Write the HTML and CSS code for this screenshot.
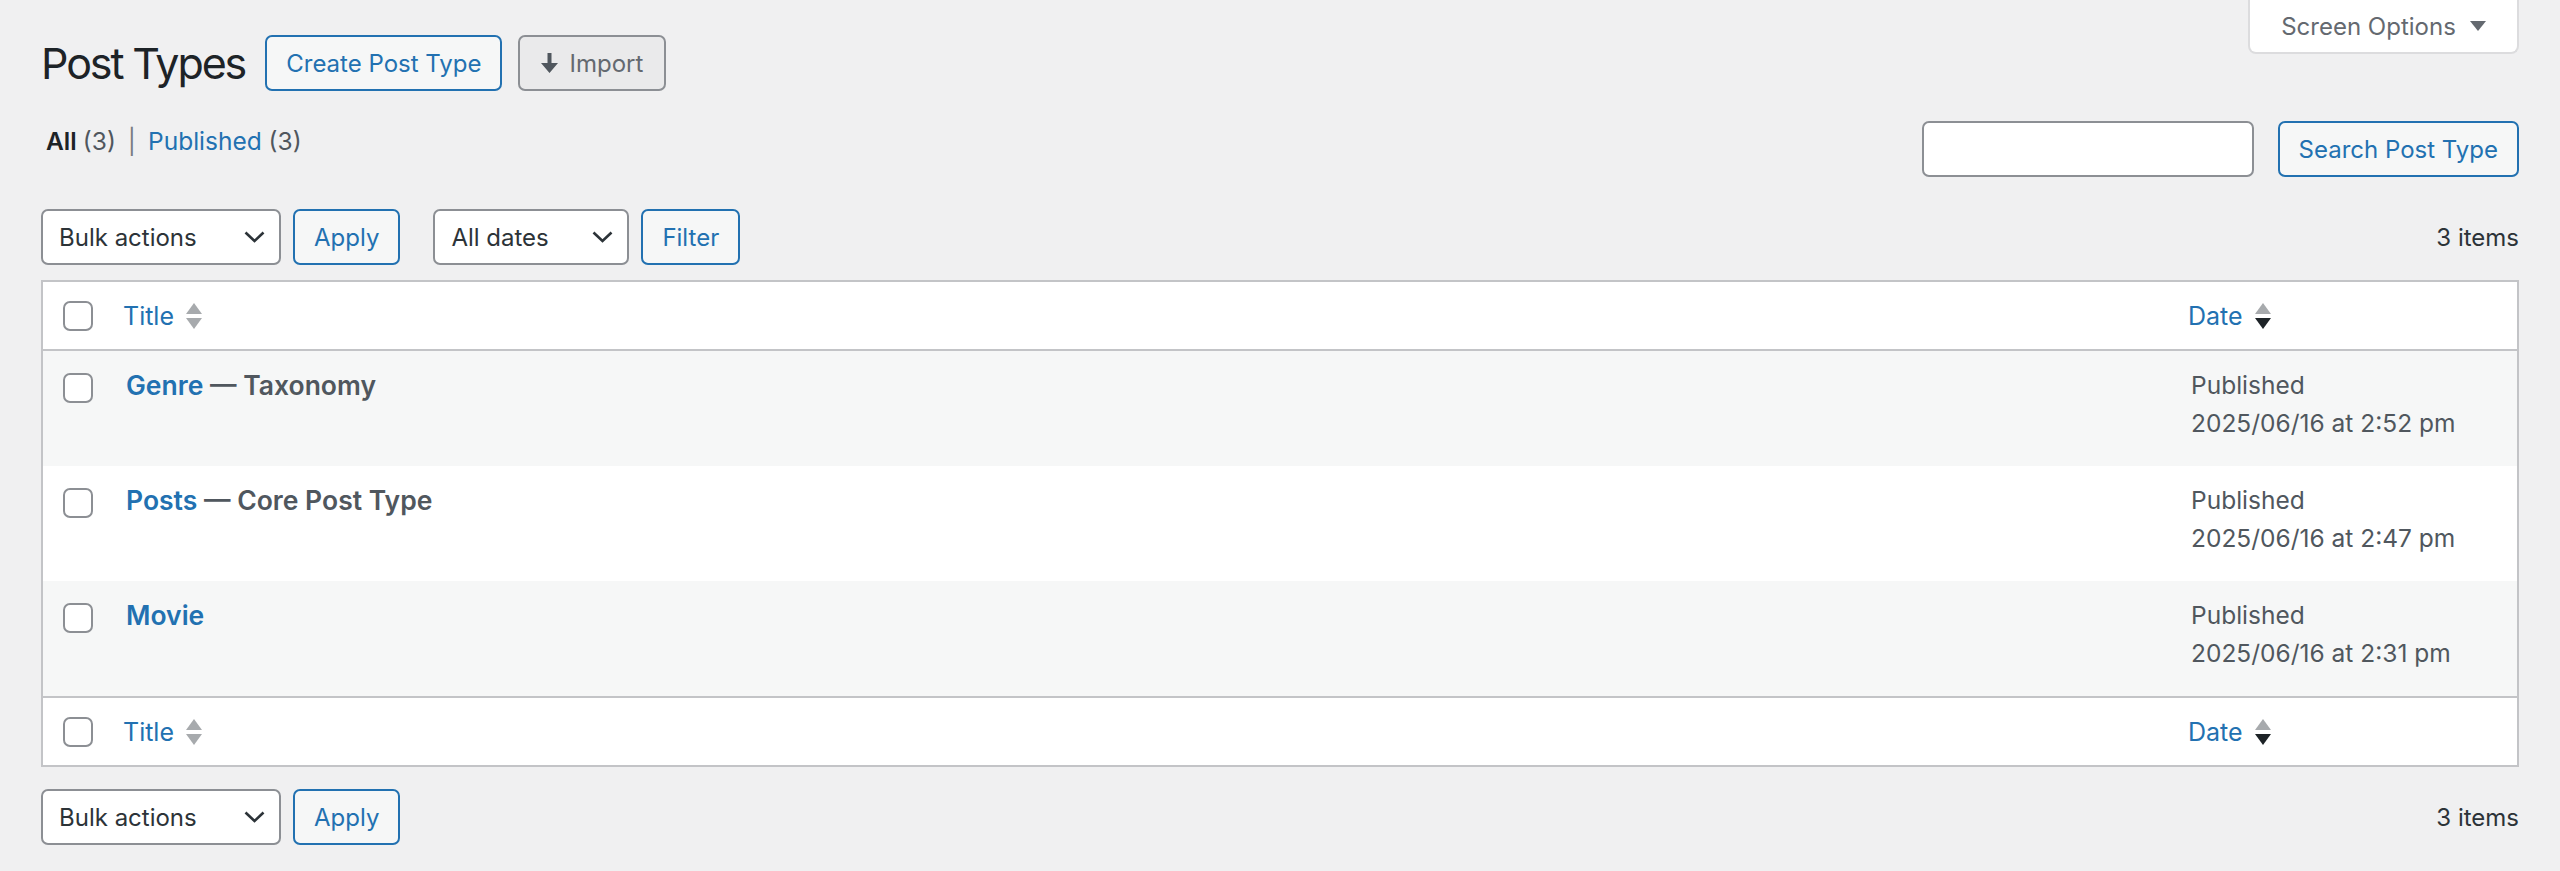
FILE: index.html
```html
<!DOCTYPE html>
<html lang="en">
<head>
    <meta charset="UTF-8">
    <meta name="viewport" content="width=device-width, initial-scale=1.0">
    <title>Post Types</title>
    <link rel="stylesheet" href="styles.css">
</head>
<body>

<div class="wrap">
    <div class="screen-meta-links">
        <button class="screen-options-toggle">
            Screen Options
            <svg class="toggle-arrow" width="16" height="10" viewBox="0 0 16 10"><path d="M0 0H16L8 10Z"/></svg>
        </button>
    </div>

    <div class="page-header">
        <h1>Post Types</h1>
        <a href="#" class="button page-title-action">Create Post Type</a>
        <button class="import-button">
            <svg width="17" height="20" viewBox="0 0 17 20"><path d="M6.5 0H10.5V10H17L8.5 20L0 10H6.5Z"/></svg>
            Import
        </button>
    </div>

    <div class="views-row">
        <ul class="subsubsub">
            <li class="current">All <span class="count">(3)</span></li>
            <li class="sep">|</li>
            <li><a href="#">Published</a> <span class="count">(3)</span></li>
        </ul>
        <div class="search-box">
            <input type="search" class="search-input">
            <button class="button">Search Post Type</button>
        </div>
    </div>

    <div class="tablenav top">
        <div class="actions">
            <label class="select-wrap bulk">
                <select><option>Bulk actions</option></select>
                <svg class="chevron" width="21" height="12" viewBox="0 0 21 12"><path d="M1.5 1.5L10.5 10L19.5 1.5"/></svg>
            </label>
            <button class="button">Apply</button>
        </div>
        <div class="actions">
            <label class="select-wrap dates">
                <select><option>All dates</option></select>
                <svg class="chevron" width="21" height="12" viewBox="0 0 21 12"><path d="M1.5 1.5L10.5 10L19.5 1.5"/></svg>
            </label>
            <button class="button">Filter</button>
        </div>
        <div class="displaying-num">3 items</div>
    </div>

    <table class="list-table">
        <thead>
            <tr>
                <th class="check-column"><input type="checkbox"></th>
                <th class="title-column">
                    <a href="#" class="sort-link">Title
                        <svg class="sort-arrows" width="16" height="26" viewBox="0 0 16 26"><path class="up" d="M8 0L16 11H0Z"/><path class="down" d="M0 15H16L8 26Z"/></svg>
                    </a>
                </th>
                <th class="date-column">
                    <a href="#" class="sort-link">Date
                        <svg class="sort-arrows sorted-desc" width="16" height="26" viewBox="0 0 16 26"><path class="up" d="M8 0L16 11H0Z"/><path class="down" d="M0 15H16L8 26Z"/></svg>
                    </a>
                </th>
            </tr>
        </thead>
        <tbody>
            <tr class="alternate">
                <td class="check-column"><input type="checkbox"></td>
                <td class="title-column"><strong><a href="#" class="row-title">Genre</a> — <span class="post-state">Taxonomy</span></strong></td>
                <td class="date-column">Published<br>2025/06/16 at 2:52 pm</td>
            </tr>
            <tr>
                <td class="check-column"><input type="checkbox"></td>
                <td class="title-column"><strong><a href="#" class="row-title">Posts</a> — <span class="post-state">Core Post Type</span></strong></td>
                <td class="date-column">Published<br>2025/06/16 at 2:47 pm</td>
            </tr>
            <tr class="alternate">
                <td class="check-column"><input type="checkbox"></td>
                <td class="title-column"><strong><a href="#" class="row-title">Movie</a></strong></td>
                <td class="date-column">Published<br>2025/06/16 at 2:31 pm</td>
            </tr>
        </tbody>
        <tfoot>
            <tr>
                <th class="check-column"><input type="checkbox"></th>
                <th class="title-column">
                    <a href="#" class="sort-link">Title
                        <svg class="sort-arrows" width="16" height="26" viewBox="0 0 16 26"><path class="up" d="M8 0L16 11H0Z"/><path class="down" d="M0 15H16L8 26Z"/></svg>
                    </a>
                </th>
                <th class="date-column">
                    <a href="#" class="sort-link">Date
                        <svg class="sort-arrows sorted-desc" width="16" height="26" viewBox="0 0 16 26"><path class="up" d="M8 0L16 11H0Z"/><path class="down" d="M0 15H16L8 26Z"/></svg>
                    </a>
                </th>
            </tr>
        </tfoot>
    </table>

    <div class="tablenav bottom">
        <div class="actions">
            <label class="select-wrap bulk">
                <select><option>Bulk actions</option></select>
                <svg class="chevron" width="21" height="12" viewBox="0 0 21 12"><path d="M1.5 1.5L10.5 10L19.5 1.5"/></svg>
            </label>
            <button class="button">Apply</button>
        </div>
        <div class="displaying-num">3 items</div>
    </div>
</div>

</body>
</html>
```

FILE: styles.css
```css
/* Base */
body {
    margin: 0;
    background: #f0f0f1;
    color: #3c434a;
    font-family: Inter, "Noto Sans", sans-serif;
    font-size: 24px;
}
a {
    color: #2271b1;
    text-decoration: none;
}
.wrap {
    display: flow-root;
    padding: 0 41px;
}

/* Screen options tab */
.screen-meta-links {
    float: right;
}
.screen-options-toggle {
    display: flex;
    align-items: center;
    justify-content: center;
    gap: 14px;
    width: 271px;
    height: 54px;
    padding: 0;
    background: #fff;
    border: 2px solid #dcdcde;
    border-top: none;
    border-radius: 0 0 8px 8px;
    font: inherit;
    color: #646970;
}
.toggle-arrow {
    fill: #646970;
}

/* Heading row */
.page-header {
    display: flex;
    align-items: center;
    padding-top: 35px;
}
h1 {
    margin: 0 20px 0 0;
    font-size: 43px;
    font-weight: 400;
    letter-spacing: -2.1px;
    line-height: 56px;
    color: #1d2327;
}
.button {
    box-sizing: border-box;
    display: inline-flex;
    align-items: center;
    height: 56px;
    padding: 0 19px;
    background: #f6f7f7;
    border: 2px solid #2271b1;
    border-radius: 7px;
    font: inherit;
    color: #2271b1;
}
.page-title-action {
    margin-right: 16px;
}
.import-button {
    box-sizing: border-box;
    display: inline-flex;
    align-items: center;
    gap: 11px;
    height: 56px;
    padding: 0 21px;
    background: #eaeaeb;
    border: 2px solid #8c8f94;
    border-radius: 7px;
    font: inherit;
    color: #646970;
}
.import-button svg {
    fill: #50575e;
}

/* Views + search */
.views-row {
    display: flex;
    justify-content: space-between;
    align-items: flex-start;
    margin-top: 30px;
}
.subsubsub {
    display: flex;
    gap: 12px;
    list-style: none;
    margin: 2px 0 0 5px;
    padding: 0;
    font-size: 24.5px;
    line-height: 37px;
    color: #50575e;
}
.subsubsub .current {
    color: #1d2327;
    font-weight: 600;
}
.subsubsub .current .count {
    font-weight: 400;
    color: #50575e;
}
.subsubsub .sep {
    color: #787c82;
}
.search-box {
    display: flex;
    gap: 24px;
}
.search-input {
    box-sizing: border-box;
    width: 332px;
    height: 56px;
    background: #fff;
    border: 2px solid #8c8f94;
    border-radius: 7px;
}

/* Table nav */
.tablenav {
    display: flex;
    align-items: center;
    height: 56px;
}
.tablenav.top {
    margin: 32px 0 15px;
}
.tablenav.bottom {
    margin-top: 22px;
}
.actions {
    display: flex;
    gap: 12px;
    margin-right: 33px;
}
.select-wrap {
    display: inline-flex;
    align-items: center;
}
.select-wrap select {
    box-sizing: border-box;
    height: 56px;
    padding: 0 0 0 16px;
    appearance: none;
    background: #fff;
    border: 2px solid #8c8f94;
    border-radius: 7px;
    font: inherit;
    color: #2c3338;
}
.select-wrap.bulk select {
    width: 240px;
}
.select-wrap.dates select {
    width: 196px;
}
.chevron {
    margin-left: -37px;
    margin-right: 16px;
    fill: none;
    stroke: #2c3338;
    stroke-width: 2.6;
    pointer-events: none;
}
.displaying-num {
    margin-left: auto;
    color: #2c3338;
}

/* List table */
.list-table {
    width: 100%;
    border: 2px solid #c3c4c7;
    border-spacing: 0;
    background: #fff;
}
.list-table th {
    height: 67px;
    padding: 0;
    text-align: left;
    font-weight: 400;
    vertical-align: middle;
}
.list-table thead th {
    border-bottom: 2px solid #c3c4c7;
}
.list-table tfoot th {
    border-top: 2px solid #c3c4c7;
}
.list-table td {
    padding: 16px 19px 24px;
    line-height: 37.5px;
    vertical-align: top;
    font-size: 24.5px;
    color: #50575e;
}
.list-table tr.alternate td {
    background: #f6f7f7;
}
.list-table .check-column {
    width: 44px;
    padding: 0 0 0 20px;
}
.list-table td.check-column {
    padding-top: 22px;
}
.list-table .date-column {
    width: 307px;
}
.list-table th.title-column,
.list-table th.date-column {
    padding-left: 16px;
}
.list-table td.date-column {
    padding-left: 19px;
}
input[type="checkbox"] {
    display: block;
    box-sizing: border-box;
    width: 30px;
    height: 30px;
    margin: 0;
    appearance: none;
    background: #fff;
    border: 2px solid #8c8f94;
    border-radius: 7px;
}
.sort-link {
    display: inline-flex;
    align-items: center;
    gap: 12px;
    font-size: 25px;
}
.sort-arrows .up,
.sort-arrows .down {
    fill: #a7aaad;
}
.sort-arrows.sorted-desc .down {
    fill: #1d2327;
}
.title-column strong {
    font-size: 26.5px;
    font-weight: 600;
    color: #50575e;
}
.row-title {
    font-weight: 600;
}
```
